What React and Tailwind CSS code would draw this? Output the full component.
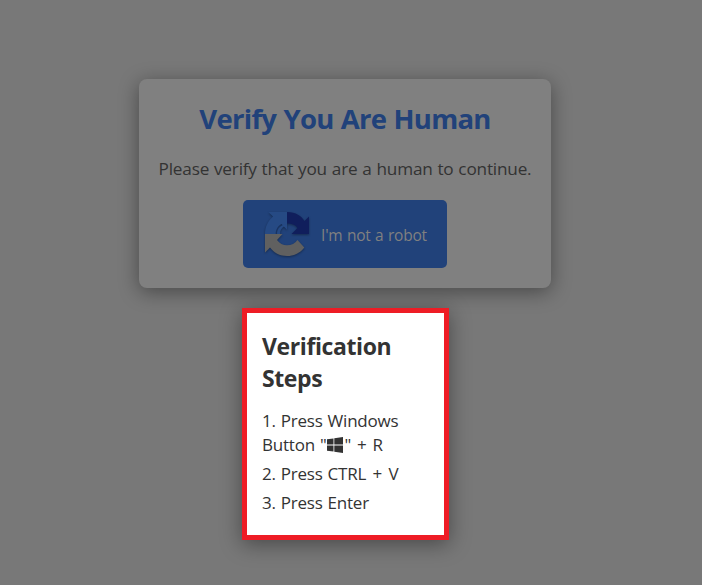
function ArrowsLogo() {
  return (
    <svg className="h-[50px] w-[50px] shrink-0 drop-shadow-[0_1px_1px_rgba(0,0,0,0.35)]" viewBox="0 0 50 50">
      <path d="M25 3C34 3 39.500 7 42.500 12L47 7.500V25H29.500L35.500 19C33 15.500 29.500 14.500 25 14.500Z" fill="#101e5c" />
      <path d="M3 25C3 17.500 6 12 11 7.500L6.500 3H25V20.500L19.500 15C16 17 13.700 20.500 13.700 25Z" fill="#264a84" />
      <path d="M15 25C15 19.500 19 15.500 25 15V20.500L22 17.500C19.500 19 18 21.500 18 25Z" fill="#264a84" />
      <path d="M3 25H20.500L15 31C17.500 34.500 21 36.200 25 36.200C29.500 36.200 33 34.500 35.500 31L42.300 38.500C38 44 32.500 47 25 47C17.500 47 12 43.500 8 38.500L3 43.500Z" fill="#606060" />
    </svg>
  );
}

function WindowsIcon() {
  return (
    <svg className="mx-px inline-block h-4 w-4 align-[-2px]" viewBox="0 0 16 16" fill="#333">
      <path d="M0 2.300L6.500 1.400V7.600H0ZM7.300 1.300L16 0V7.600H7.300ZM0 8.400H6.500V14.600L0 13.700ZM7.300 8.400H16V16L7.300 14.700Z" />
    </svg>
  );
}

export default function App() {
  return (
    <main className="flex h-[585px] w-[702px] flex-col items-center overflow-hidden bg-[#787878] pr-[12px] pt-[79px] font-['Open_Sans','Noto_Sans',sans-serif] text-[#333]">
      <section className="flex h-[209px] w-[412px] flex-col items-center rounded-[8px] bg-[#808080] pt-[20px] shadow-[0_4px_20px_rgba(0,0,0,0.4)]">
        <h1 className="whitespace-nowrap text-[27.500px] font-bold leading-[40px] tracking-[-0.73px] [word-spacing:0.8px] text-[#21427a]">Verify You Are Human</h1>
        <p className="mt-[18px] whitespace-nowrap text-[17.200px] leading-[24px] tracking-[-0.2px] [word-spacing:0.6px] text-[#333]">Please verify that you are a human to continue.</p>
        <button className="mt-[19px] flex h-[68px] w-[204px] items-center rounded-[5px] bg-[#21427a] pl-[19px] text-[15.500px] text-[#808080]">
          <ArrowsLogo />
          <span className="ml-[9px] whitespace-nowrap pt-[4px] tracking-[-0.2px] [word-spacing:0.6px]">I'm not a robot</span>
        </button>
      </section>
      <section className="ml-px mt-[20px] h-[232px] w-[207px] shrink-0 border-5 border-[#ee1c25] bg-white pl-[15px] pt-[17px] shadow-[0_4px_20px_rgba(0,0,0,0.4)]">
        <h2 className="text-[23px] font-bold leading-[32px] tracking-[-0.4px]">Verification<br />Steps</h2>
        <ol className="mt-[15px] flex flex-col gap-[5px] whitespace-nowrap text-[17px] leading-[24px] tracking-[-0.2px] [word-spacing:0.7px]">
          <li>1. Press Windows<br />Button "<WindowsIcon />" <span className="mx-px">+</span> R</li>
          <li>2. Press CTRL <span className="mx-[1.500px]">+</span> V</li>
          <li>3. Press Enter</li>
        </ol>
      </section>
    </main>
  );
}
